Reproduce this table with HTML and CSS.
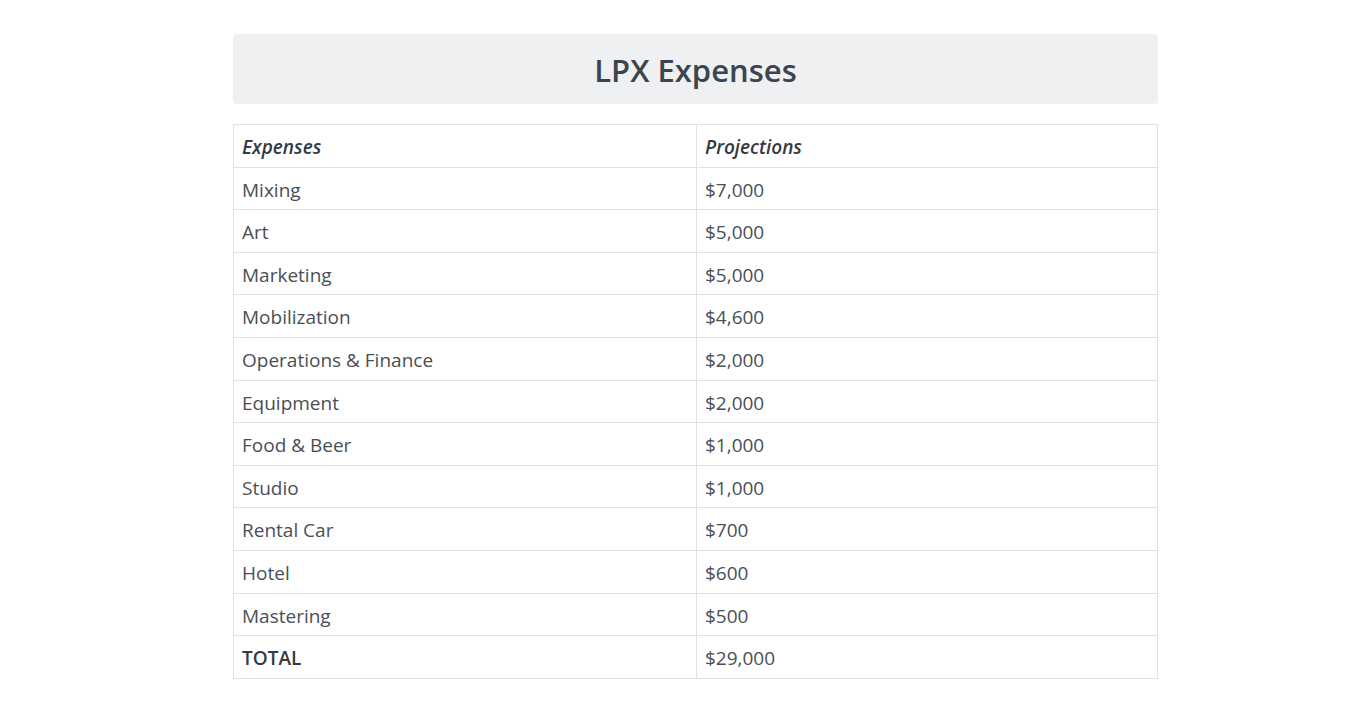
FILE: index.html
```html
<!DOCTYPE html>
<html lang="en">
<head>
<meta charset="utf-8">
<title>LPX Expenses</title>
<link rel="stylesheet" href="styles.css">
</head>
<body>
<main class="page">
  <header class="banner">
    <h1 class="banner-title">LPX Expenses</h1>
  </header>
  <table class="expenses">
    <colgroup><col class="col-a"><col class="col-b"></colgroup>
    <thead>
      <tr><th>Expenses</th><th>Projections</th></tr>
    </thead>
    <tbody>
      <tr><td>Mixing</td><td>$7,000</td></tr>
      <tr><td>Art</td><td>$5,000</td></tr>
      <tr><td>Marketing</td><td>$5,000</td></tr>
      <tr><td>Mobilization</td><td>$4,600</td></tr>
      <tr><td>Operations &amp; Finance</td><td>$2,000</td></tr>
      <tr><td>Equipment</td><td>$2,000</td></tr>
      <tr><td>Food &amp; Beer</td><td>$1,000</td></tr>
      <tr><td>Studio</td><td>$1,000</td></tr>
      <tr><td>Rental Car</td><td>$700</td></tr>
      <tr><td>Hotel</td><td>$600</td></tr>
      <tr><td>Mastering</td><td>$500</td></tr>
      <tr><td class="total">TOTAL</td><td>$29,000</td></tr>
    </tbody>
  </table>
</main>
</body>
</html>
```

FILE: styles.css
```css
* { box-sizing: border-box; }
html, body {
  margin: 0;
  padding: 0;
  background: #fff;
}
body {
  font-family: "Open Sans", "Noto Sans", sans-serif;
  color: #495057;
}
.page {
  width: 925px;
  margin: 34px 0 0 233px;
}
.banner {
  background: #eff0f2;
  border-radius: 4px;
  height: 70px;
  display: flex;
  align-items: center;
  justify-content: center;
  padding-top: 3px;
  margin-bottom: 20px;
}
.banner-title {
  margin: 0;
  font-size: 31px;
  font-weight: 600;
  color: #3b4550;
  line-height: 1.2;
}
.expenses {
  width: 924px;
  border-collapse: collapse;
  table-layout: fixed;
  border: 1px solid #dee2e6;
}
.col-a { width: 463px; }
.col-b { width: 461px; }
.expenses th,
.expenses td {
  border: 1px solid #dee2e6;
  padding: 3px 8px 0;
  height: 42.6px;
  text-align: left;
  vertical-align: middle;
  font-size: 19px;
  line-height: 1.5;
}
.expenses th {
  font-style: italic;
  font-weight: 600;
  color: #343a40;
}
.expenses td { color: #4a4f55; }
.expenses td.total {
  font-weight: 600;
  color: #343a40;
}
```
